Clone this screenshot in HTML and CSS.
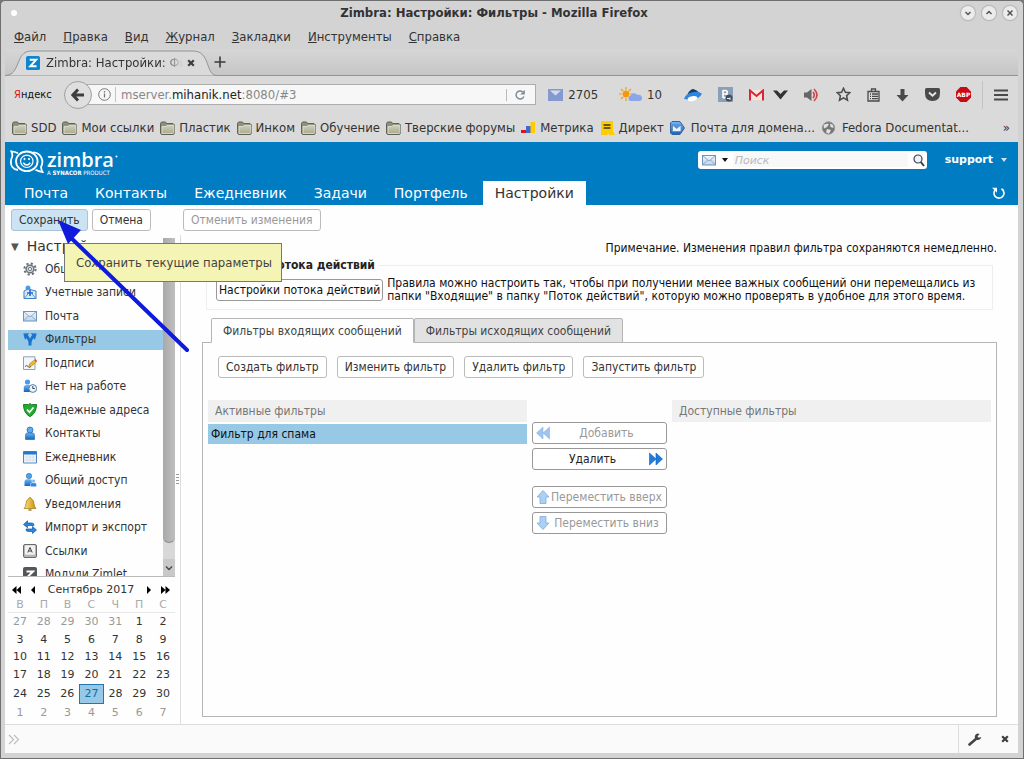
FILE: index.html
```html
<!DOCTYPE html>
<html lang="ru">
<head>
<meta charset="utf-8">
<title>Zimbra: Настройки: Фильтры</title>
<link rel="stylesheet" href="styles.css">
</head>
<body>
<svg class="defs" aria-hidden="true">
  <defs>
    <linearGradient id="g-blue" x1="0" y1="0" x2="0" y2="1"><stop offset="0" stop-color="#6db8f4"/><stop offset="1" stop-color="#1264bd"/></linearGradient>
    <linearGradient id="g-env" x1="0" y1="0" x2="0" y2="1"><stop offset="0" stop-color="#f2f7fc"/><stop offset="1" stop-color="#bdd3ea"/></linearGradient>
    <linearGradient id="g-folder" x1="0" y1="0" x2="0" y2="1"><stop offset="0" stop-color="#cdd0b8"/><stop offset="1" stop-color="#a9ac93"/></linearGradient>
    <linearGradient id="g-gold" x1="0" y1="0" x2="1" y2="0"><stop offset="0" stop-color="#fbe27c"/><stop offset="1" stop-color="#c98f0c"/></linearGradient>
  </defs>
  <symbol id="folder" viewBox="0 0 15 14"><path d="M.5 12V2.500l1-1.500h4l1 1.500h6.500l1.500 1.500V12l-1 1.500h-12z" fill="#8d907d" stroke="#5f6255"/><path d="M2 12.500V5.500h4l1-1.200h7v7.200l-.8 1z" fill="url(#g-folder)" stroke="#ebecdf" stroke-width=".7"/></symbol>
  <symbol id="envelope" viewBox="0 0 14 12"><rect x=".5" y="1.500" width="13" height="9.500" fill="url(#g-env)" stroke="#6f94bd"/><path d="M1 2l6 5 6-5M1 10.500l4.500-4.500M13 10.500L8.500 6" fill="none" stroke="#7fa3ca" stroke-width=".9"/></symbol>
  <symbol id="person" viewBox="0 0 14 14"><path d="M2.500 13.500V9.500Q2.500 6.800 5 6.800h4q2.500 0 2.500 2.700v4z" fill="url(#g-blue)" stroke="#1a5fae" stroke-width=".6"/><circle cx="7" cy="4" r="3" fill="#5fadef" stroke="#1d63ad" stroke-width=".7"/></symbol>
</svg>
<div class="window">
  <header class="titlebar">
    <span class="win-dot"></span>
    <h1 class="win-title">Zimbra: Настройки: Фильтры - Mozilla Firefox</h1>
    <div class="win-buttons">
      <button class="win-btn" aria-label="Свернуть"><svg viewBox="0 0 14 14"><path d="M4.500 6l2.500 2.500L9.500 6"/></svg></button>
      <button class="win-btn" aria-label="Развернуть"><svg viewBox="0 0 14 14"><path d="M4.500 8L7 5.500 9.500 8"/></svg></button>
      <button class="win-btn" aria-label="Закрыть"><svg viewBox="0 0 14 14"><path d="M4.500 4.500l5 5M9.500 4.500l-5 5"/></svg></button>
    </div>
  </header>
  <nav class="menubar">
    <a href="#"><u>Ф</u>айл</a><a href="#"><u>П</u>равка</a><a href="#"><u>В</u>ид</a><a href="#"><u>Ж</u>урнал</a><a href="#"><u>З</u>акладки</a><a href="#"><u>И</u>нструменты</a><a href="#"><u>С</u>правка</a>
  </nav>
  <div class="tabstrip">
    <svg class="tab-shape" viewBox="0 0 212 26"><path d="M0 25.500C16 25.500 10 1 26 1H188C206 1 200 25.500 212 25.500" fill="#dadada" stroke="#8f949a"/></svg>
    <div class="tab-body">
      <svg class="fav" viewBox="0 0 15 15"><rect width="15" height="15" rx="2" fill="#0a86cf"/><path d="M4 4h7L4.500 11H11.300" fill="none" stroke="#fff" stroke-width="2"/></svg>
      <span class="tab-title">Zimbra: Настройки: Фильтры</span>
      <button class="tab-close" aria-label="Закрыть вкладку"><svg viewBox="0 0 8 8"><path d="M1.200 1.200l5.600 5.600M6.800 1.200L1.200 6.800" stroke="#3d3d3d" stroke-width="2.200"/></svg></button>
    </div>
    <button class="tab-new" aria-label="Новая вкладка"><svg viewBox="0 0 12 12"><path d="M6 .5v11M.5 6h11" stroke="#3a3a3a" stroke-width="1.600"/></svg></button>
  </div>
  <div class="navbar">
    <span class="yandex"><b>Я</b>ндекс</span>
    <button class="back" aria-label="Назад"><svg viewBox="0 0 14 14"><path d="M7 1.500L1.800 7 7 12.500M2.500 7H13" fill="none" stroke="#3d3d3d" stroke-width="3"/></svg></button>
    <div class="urlbar">
      <svg class="info" viewBox="0 0 13 13"><circle cx="6.500" cy="6.500" r="5.800" fill="none" stroke="#777"/><path d="M6.500 5.500v4M6.500 3v1.500" stroke="#777" stroke-width="1.300"/></svg>
      <span class="url">mserver.<b>mihanik.net</b>:8080/#3</span>
      <button class="reload" aria-label="Обновить"><svg viewBox="0 0 12 12"><path d="M9.800 7.500A4 4 0 1 1 8.800 3" fill="none" stroke="#7f8b95" stroke-width="1.500"/><path d="M10.800.800v4.700H6.300z" fill="#7f8b95"/></svg></button>
    </div>
    <div class="addons">
      <button class="addon mail"><svg width="15" height="12" viewBox="0 0 15 12"><rect width="15" height="12" fill="#8499cf"/><path d="M2 1.500L7.500 6.500 13 1.500" fill="#d3dbef" /></svg>2705</button>
      <button class="addon weather"><svg width="23" height="15" viewBox="0 0 23 15"><g stroke="#f29b1c" stroke-width="1.200"><path d="M7 0v14M0 7h14M2 2l10 10M12 2L2 12"/></g><circle cx="7" cy="7" r="4" fill="#f2990f" stroke="#e6d5b8"/><path d="M11 14a3 3 0 0 1 .5-5.500 4 4 0 0 1 7-.5 3 3 0 0 1 2.500 6z" fill="#8ba7e8"/></svg>10</button>
      <button class="addon" aria-label="Яндекс Диск"><svg width="18" height="14" viewBox="0 0 20 15"><path d="M4 6Q8 0 11 1t6 4L9 8z" fill="#1c3b5c"/><path d="M0 12Q2 6 9 4.500T20 6Q17 12 8 13z" fill="#2d86e4"/><ellipse cx="9.500" cy="11.500" rx="5.500" ry="2.600" transform="rotate(-12 9.500 11.500)" fill="#fff"/></svg></button>
      <button class="addon" aria-label="ВКонтакте"><svg width="15" height="15" viewBox="0 0 15 15"><rect width="15" height="15" fill="#8b9fba"/><path d="M5 3v8M5 3.500h2.500a1.500 1.500 0 0 1 0 3.500H5M8 7a1.800 1.800 0 0 1 0 3.600H5" stroke="#fff" stroke-width="1.600" fill="none"/><circle cx="11" cy="11" r="3.500" fill="#3f4d5c"/><path d="M9 11.500h3M12 13V10.500" stroke="#eee"/></svg></button>
      <button class="addon gmail" aria-label="Gmail"><svg width="15" height="12" viewBox="0 0 15 12"><rect x="1" y="1" width="13" height="10" fill="#f3e7da"/><path d="M1 11.500V1.500L7.500 7 14 1.500v10" fill="none" stroke="#e02136" stroke-width="2"/></svg><svg width="15" height="10" viewBox="0 0 15 10"><path d="M0 .5h4L7.500 4 11 .5h4L7.500 9.500z" fill="#333"/></svg></button>
      <button class="addon" aria-label="Звук"><svg width="16" height="14" viewBox="0 0 16 14"><path d="M0 4.500h3L7.500 1v12L3 9.500H0z" fill="#666"/><path d="M9 4q2.500 3 0 6M10 1q6 6 0 12" fill="none" stroke="#d0454a" stroke-width="1.600"/></svg></button>
      <button class="addon" aria-label="Закладка"><svg width="15" height="15" viewBox="0 0 15 15"><path d="M7.500 1.200l1.900 4 4.400.5-3.200 3 .9 4.500-4-2.300-4 2.300.9-4.500-3.200-3 4.400-.5z" fill="none" stroke="#4a4a4a" stroke-width="1.500"/></svg></button>
      <button class="addon" aria-label="Библиотека"><svg width="13" height="14" viewBox="0 0 13 14"><path d="M1 3.500h11v9.500H1zM4.500 3V1h4v2M3 6h1M5 6h6M3 8.300h1M5 8.300h6M3 10.600h1M5 10.600h6" fill="none" stroke="#4a4a4a" stroke-width="1.300"/></svg></button>
      <button class="addon" aria-label="Загрузки"><svg width="13" height="14" viewBox="0 0 13 14"><path d="M4.500 1h4v6H12.500L6.500 13.500.5 7h4z" fill="#4a4a4a"/></svg></button>
      <button class="addon" aria-label="Pocket"><svg width="15" height="13" viewBox="0 0 15 13"><path d="M1.500 0h12Q15 0 15 1.500V5q0 8-7.500 8T0 5V1.500Q0 0 1.500 0z" fill="#4a4a4a"/><path d="M4 4.500l3.500 3.200L11 4.500" fill="none" stroke="#e8e8e8" stroke-width="1.800"/></svg></button>
      <button class="addon" aria-label="Adblock Plus"><svg width="15" height="15" viewBox="0 0 15 15"><path d="M4.400 0h6.200L15 4.400v6.200L10.600 15H4.400L0 10.600V4.400z" fill="#cc0814"/><text x="7.500" y="10" text-anchor="middle" class="abp">ABP</text></svg></button>
      <button class="addon burger" aria-label="Меню"><svg width="14" height="12" viewBox="0 0 14 12"><path d="M0 1.500h14M0 6h14M0 10.500h14" stroke="#4a4a4a" stroke-width="2.200"/></svg></button>
    </div>
  </div>
  <nav class="bookmarks">
    <a href="#"><svg><use href="#folder"/></svg>SDD</a>
    <a href="#"><svg><use href="#folder"/></svg>Мои ссылки</a>
    <a href="#"><svg><use href="#folder"/></svg>Пластик</a>
    <a href="#"><svg><use href="#folder"/></svg>Инком</a>
    <a href="#"><svg><use href="#folder"/></svg>Обучение</a>
    <a href="#"><svg><use href="#folder"/></svg>Тверские форумы</a>
    <a href="#"><svg viewBox="0 0 15 14"><path d="M0 9h6v3H0z" fill="#e2121c"/><path d="M5 5h5v7H5z" fill="#3c6cd0"/><path d="M9.500 1H14v11H9.500z" fill="#fc0"/></svg>Метрика</a>
    <a href="#"><svg viewBox="0 0 15 14"><path d="M1 0h12v10l2 4H9l-1-2-1 2H1z" fill="#fc0"/><path d="M3.500 4h7M3.500 7h7" stroke="#333" stroke-width="1.500"/></svg>Директ</a>
    <a href="#" class="domain"><svg viewBox="0 0 15 14"><path d="M2 .5h8L14.500 7 10 13.500H2L.5 12V2z" fill="url(#g-blue)" stroke="#3a62a0"/><path d="M2.500 4h8.500v6.500H2.500zM2.500 4l4.200 3.500L11 4" fill="#e9f1fb" stroke="#5e84bd" stroke-width=".8"/></svg>Почта для домена...</a>
    <a href="#" class="fedora"><svg viewBox="0 0 15 14"><circle cx="7.500" cy="7" r="6.200" fill="#777" stroke="#999"/><path d="M2.500 4Q6 2 8 3L6 6 3 7.500zM9 2.500l3 1.500.5 3-3-1zM6 8l4 1-2 3.800-3-1.500z" fill="#e3e3e3"/></svg>Fedora Documentat...</a>
    <button class="more" aria-label="Ещё закладки">»</button>
  </nav>

  <main class="app">
    <header class="app-head">
      <div class="head-top">
        <div class="logo">
          <svg class="logo-face" viewBox="0 0 34 24" fill="none" stroke="#fff"><path d="M8 3.200Q5 1.700 1.300 1.400 2.700 4 2.200 6.500-.5 13 2.300 17 4 19.500 8 20" stroke-width="1.800"/><path d="M23 2.300Q29 2.500 31.300 7.500T31 17q.3 3 1.500 5-4-.4-7-2.200" stroke-width="1.800"/><ellipse cx="16.800" cy="11.300" rx="10.800" ry="9.800" stroke-width="1.800"/><circle cx="16.800" cy="11.300" r="6.200" stroke-width="1.200"/><path d="M13.300 12.800q3.500 4.500 7 0" stroke-width="1.600"/><circle cx="14.500" cy="9" r=".7" fill="#fff"/><circle cx="19" cy="9" r=".7" fill="#fff"/></svg>
          <div class="logo-text"><span class="logo-name">zimbra<svg width="3" height="3" viewBox="0 0 3 3"><circle cx="1.500" cy="1.500" r="1" fill="#fff"/></svg></span><span class="logo-sub">A <b>SYNACOR</b> PRODUCT</span></div>
        </div>
        <div class="head-right">
          <div class="search">
            <button class="search-type" aria-label="Тип поиска"><svg width="14" height="12"><use href="#envelope"/></svg><span class="caret"></span></button>
            <input type="text" placeholder="Поиск" aria-label="Поиск">
            <button class="search-go" aria-label="Искать"><svg width="12" height="13" viewBox="0 0 12 13"><circle cx="5" cy="5" r="4" fill="#eef2f6" stroke="#3c4250" stroke-width="1.200"/><path d="M7.800 8l3.200 4" stroke="#333a48" stroke-width="2"/></svg></button>
          </div>
          <button class="user">support<span class="caret"></span></button>
        </div>
      </div>
      <div class="head-tabs">
        <nav class="app-tabs">
          <a href="#">Почта</a><a href="#">Контакты</a><a href="#">Ежедневник</a><a href="#">Задачи</a><a href="#">Портфель</a><a href="#" class="active">Настройки</a>
        </nav>
        <button class="refresh" aria-label="Обновить данные"><svg width="13" height="13" viewBox="0 0 13 13"><path d="M9.500 1.800A5 5 0 1 1 3.500 2.500" fill="none" stroke="#fff" stroke-width="1.600"/><path d="M0 .8h5v5z" fill="#fff"/></svg></button>
      </div>
    </header>
    <div class="toolbar">
      <button class="btn primary">Сохранить</button>
      <button class="btn">Отмена</button>
      <button class="btn revert" disabled>Отменить изменения</button>
    </div>
    <div class="columns">
      <aside class="side">
        <div class="tree">
          <div class="tree-view">
            <h2 class="tree-head"><span>▼</span>Настройки</h2>
            <ul class="tree-list">
              <li><svg viewBox="0 0 14 14"><circle cx="7" cy="7" r="5.600" fill="none" stroke="#687078" stroke-width="2" stroke-dasharray="2.200 2.200"/><circle cx="7" cy="7" r="3.800" fill="#dbe1e6" stroke="#6c747c" stroke-width="1.500"/><circle cx="7" cy="7" r="1.600" fill="#fff" stroke="#6c747c"/></svg>Общие</li>
              <li><svg viewBox="0 0 14 14"><circle cx="5" cy="3" r="2.500" fill="#4b9fe8"/><path d="M1 6l4-2 8 2v7.500H1z" fill="#d9e9f8" stroke="#3f7ec4"/><path d="M1 13.500L5 9M13 13.500L9 9" stroke="#5f93cc"/><path d="M7 5v6M4 8h6" stroke="#1c6ccb" stroke-width="1.600"/></svg>Учетные записи</li>
              <li><svg viewBox="0 0 14 12"><use href="#envelope"/></svg>Почта</li>
              <li class="selected"><svg viewBox="0 0 14 14"><path d="M5.500 13.500V10.500Q5.500 8.500 3.500 6.300L2 7.800.3 1.600 6.300 1.300 4.800 3Q6.500 5 7 7 7.500 5 9.200 3L7.700 1.300l6 .3L12 7.800 10.500 6.300Q8.500 8.500 8.500 10.500v3z" fill="#1c73cd"/></svg>Фильтры</li>
              <li><svg viewBox="0 0 14 14"><path d="M.5.8h11.500v12.700H.5z" fill="#f3f6f8" stroke="#8ba2b5"/><path d="M2 10.500q2-2 3 0t3 0" fill="none" stroke="#555"/><path d="M6 10.500l.5-2.700L11.500 4l2 2-5 4z" fill="#f6b822" stroke="#9a6b10" stroke-width=".5"/><path d="M11.500 4l1-1 1.500 2-.8 1z" fill="#d63c3c"/></svg>Подписи</li>
              <li><svg viewBox="0 0 14 14"><path d="M.8 13V8.500Q.8 6 3 6h3q2 0 2 2.500V13z" fill="url(#g-blue)"/><circle cx="4.500" cy="3" r="2.600" fill="#4a9be6"/><circle cx="9.800" cy="9.500" r="3.900" fill="#eef4fa" stroke="#54809f"/><path d="M9.800 7v2.500h2" fill="none" stroke="#345"/></svg>Нет на работе</li>
              <li><svg viewBox="0 0 14 14"><path d="M7 .5l1.500 1.200 5-.2Q13.500 10 7 13.700.5 10 .5 1.500l5 .2z" fill="#1fae30" stroke="#157a20"/><path d="M4 6.500l2.500 2.800L10.500 4.500" fill="none" stroke="#fff" stroke-width="1.700"/></svg>Надежные адреса</li>
              <li><svg><use href="#person"/></svg>Контакты</li>
              <li><svg viewBox="0 0 14 14"><path d="M.5 1.500h13v11.500H.5z" fill="#eef4fa" stroke="#4f86c0"/><path d="M.5 1.500h13v3H.5z" fill="#2378cf"/><path d="M1 7h12M1 10h12M4 5v8M7 5v8M10 5v8" stroke="#cfdbe6" stroke-width=".7"/></svg>Ежедневник</li>
              <li><svg viewBox="0 0 14 14"><circle cx="6" cy="3" r="2.700" fill="#4fa2ec" stroke="#1d63ad" stroke-width=".5"/><path d="M1.500 13V9q0-2.700 2.500-2.700h3.500Q9.500 6.300 9.500 9v4z" fill="url(#g-blue)"/><circle cx="10.500" cy="8" r="1.700" fill="#69b2f2" stroke="#fff" stroke-width=".5"/><path d="M7.500 13.800V11.500Q7.500 9.800 9 9.800h3q1.500 0 1.500 1.700v2.300z" fill="#2f86dc" stroke="#fff" stroke-width=".5"/></svg>Общий доступ</li>
              <li><svg viewBox="0 0 14 14"><path d="M7 .5q1.300 0 1.300 1.300Q11 3 11 6.500q0 3 2 5H1q2-2 2-5Q3 3 5.700 1.800 5.700.5 7 .5z" fill="url(#g-gold)" stroke="#a8790f" stroke-width=".7"/><path d="M5.500 12.300h3v1.300h-3z" fill="#8a650f"/></svg>Уведомления</li>
              <li><svg viewBox="0 0 14 14"><path d="M.5 4.500L4.500.8V3H9q2 0 2 2.500H4.500v2.200zM13.500 10L9.500 13.500V11.500H5Q3 11.500 3 9h6.500V6.500z" fill="#2a86dd" stroke="#14579f" stroke-width=".7"/></svg>Импорт и экспорт</li>
              <li><svg viewBox="0 0 14 14"><rect x=".5" y=".5" width="13" height="13" rx="1.500" fill="#b5b5b5" stroke="#6a6a6a"/><rect x="2" y="1.200" width="10" height="9.500" rx="1" fill="#f1f1f1"/><path d="M4.800 8.500L7 3.500l2.200 5M5.500 7h3" fill="none" stroke="#444"/></svg>Ссылки</li>
              <li><svg viewBox="0 0 14 14"><rect width="14" height="14" rx="2" fill="#55565a"/><path d="M3.500 4.500h6.500L4.500 10h6.500" fill="none" stroke="#fff" stroke-width="2"/></svg>Модули Zimlet</li>
            </ul>
          </div>
          <div class="scroll" aria-hidden="true"><div class="thumb"></div><div class="scroll-down"><svg width="8" height="6" viewBox="0 0 8 6"><path d="M1 1.500l3 3 3-3" fill="none" stroke="#444" stroke-width="1.300"/></svg></div></div>
        </div>
        <div class="calendar">
          <div class="cal-head">
            <button aria-label="Год назад"><svg width="9" height="8" viewBox="0 0 9 8"><path d="M4.500 0v8L0 4zM9 0v8L4.500 4z"/></svg></button>
            <button aria-label="Месяц назад"><svg width="4" height="8" viewBox="0 0 4 8"><path d="M4 0v8L0 4z"/></svg></button>
            <span>Сентябрь 2017</span>
            <button aria-label="Месяц вперёд"><svg width="4" height="8" viewBox="0 0 4 8"><path d="M0 0v8l4-4z"/></svg></button>
            <button aria-label="Год вперёд"><svg width="9" height="8" viewBox="0 0 9 8"><path d="M0 0v8l4.500-4zM4.500 0v8L9 4z"/></svg></button>
          </div>
          <table class="cal">
            <thead><tr><th>В</th><th>П</th><th>В</th><th>С</th><th>Ч</th><th>П</th><th>С</th></tr></thead>
            <tbody>
            <tr><td class="out">27</td><td class="out">28</td><td class="out">29</td><td class="out">30</td><td class="out">31</td><td>1</td><td>2</td></tr>
            <tr><td>3</td><td>4</td><td>5</td><td>6</td><td>7</td><td>8</td><td>9</td></tr>
            <tr><td>10</td><td>11</td><td>12</td><td>13</td><td>14</td><td>15</td><td>16</td></tr>
            <tr><td>17</td><td>18</td><td>19</td><td>20</td><td>21</td><td>22</td><td>23</td></tr>
            <tr><td>24</td><td>25</td><td>26</td><td class="today">27</td><td>28</td><td>29</td><td>30</td></tr>
            <tr><td class="out">1</td><td class="out">2</td><td class="out">3</td><td class="out">4</td><td class="out">5</td><td class="out">6</td><td class="out">7</td></tr>
            </tbody>
          </table>
        </div>
      </aside>
      <div class="sash"><span class="grip"></span></div>
      <section class="content">
        <p class="note">Примечание. Изменения правил фильтра сохраняются немедленно.</p>
        <fieldset class="stream">
          <legend>Фильтр потока действий</legend>
          <button class="btn dark">Настройки потока действий</button>
          <p>Правила можно настроить так, чтобы при получении менее важных сообщений они перемещались из папки "Входящие" в папку "Поток действий", которую можно проверять в удобное для этого время.</p>
        </fieldset>
        <div class="ptabs">
          <button class="ptab on">Фильтры входящих сообщений</button><button class="ptab">Фильтры исходящих сообщений</button>
        </div>
        <div class="panel">
          <div class="actions">
            <button class="btn">Создать фильтр</button><button class="btn">Изменить фильтр</button><button class="btn">Удалить фильтр</button><button class="btn">Запустить фильтр</button>
          </div>
          <div class="lists">
            <div class="list"><h3>Активные фильтры</h3><div class="list-row">Фильтр для спама</div></div>
            <div class="moves">
              <button class="btn dark move" disabled><svg viewBox="0 0 14 14"><path d="M7 1v12L.5 7zM13.500 1v12L7 7z" fill="#9fc5ef" stroke="#8ab6e6" stroke-width=".6"/></svg><span>Добавить</span></button>
              <button class="btn dark move"><span>Удалить</span><svg viewBox="0 0 14 14"><path d="M.5 1v12L7 7zM7 1v12l6.500-6z" fill="#1f7ddb" stroke="#1260b8" stroke-width=".6"/></svg></button>
              <button class="btn dark move second" disabled><svg viewBox="0 0 14 14"><path d="M7 .5l6 6.500H10v6.500H4V7H1z" fill="#acd0f3" stroke="#7fabdd" stroke-width=".8"/></svg><span>Переместить вверх</span></button>
              <button class="btn dark move" disabled><svg viewBox="0 0 14 14"><path d="M7 13.500l6-6.500H10V.5H4V7H1z" fill="#acd0f3" stroke="#7fabdd" stroke-width=".8"/></svg><span>Переместить вниз</span></button>
            </div>
            <div class="list"><h3>Доступные фильтры</h3></div>
          </div>
        </div>
      </section>
    </div>
    <footer class="status">
      <svg width="12" height="11" viewBox="0 0 12 11"><path d="M1 1l4.500 4.500L1 10M6 1l4.500 4.500L6 10" fill="none" stroke="#bbb" stroke-width="1.100"/></svg>
      <div class="status-tools">
        <button aria-label="Настройки панели"><svg width="14" height="13" viewBox="0 0 14 13"><path d="M1.500 11.500L8.500 5.500" stroke="#454545" stroke-width="2.600" stroke-linecap="round"/><path d="M11.500 1A3.200 3.200 0 1 0 13.200 4L10.800 4.800 9.500 3.500z" fill="#454545"/></svg></button>
        <button aria-label="Закрыть панель"><svg width="8" height="8" viewBox="0 0 8 8"><path d="M1.200 1.200l5.600 5.600M6.800 1.200L1.200 6.800" stroke="#3d3d3d" stroke-width="2.200"/></svg></button>
      </div>
    </footer>
    <div class="tooltip" role="tooltip">Сохранить текущие параметры</div>
    <svg class="pointer" width="140" height="140" viewBox="0 0 140 140"><path d="M15 15L136 132" stroke="#0f1adb" stroke-width="4" stroke-linecap="round"/><path d="M7 2L30 12 17 26z" fill="#0f1adb"/></svg>
  </main>
</div>
</body>
</html>
```
FILE: styles.css
```css
* { box-sizing: border-box; }

body {
  margin: 0;
  font: 13px "DejaVu Sans Condensed", "DejaVu Sans", sans-serif;
  color: #333;
  background: #777;
}

button {
  margin: 0;
  padding: 0;
  border: 0;
  background: none;
  font: inherit;
  color: inherit;
}

a { color: inherit; text-decoration: none; }
svg { display: block; flex: none; }
.defs { position: absolute; width: 0; height: 0; }

.window {
  display: flex;
  flex-direction: column;
  height: 100vh;
  min-height: 700px;
  border: 1px solid #6f6f6f;
  border-radius: 5px 5px 0 0;
  padding: 0 5px 5px 4px;
  background: #d3d3d3;
  overflow: hidden;
}

/* Browser chrome */
.titlebar {
  display: flex;
  align-items: center;
  height: 23px;
  flex: none;
}
.win-dot {
  width: 6px;
  height: 6px;
  margin-left: 6px;
  border-radius: 50%;
  background: #fff;
}
.win-title {
  flex: 1;
  margin: 0;
  padding-left: 10px;
  font-size: 13px;
  font-weight: bold;
  text-align: center;
}
.win-buttons { display: flex; gap: 7px; padding-right: 1px; }
.win-btn {
  width: 14px;
  height: 14px;
  border-radius: 50%;
  background: #ececec;
  box-shadow: 0 0 1px 1px #b5b5b5;
}
.win-btn svg { fill: none; stroke: #555; stroke-width: 1.500; }

.menubar {
  display: flex;
  align-items: center;
  gap: 17px;
  height: 25px;
  flex: none;
  padding-left: 9px;
}

.tabstrip {
  position: relative;
  display: flex;
  height: 27px;
  flex: none;
  border-bottom: 1px solid #8f949a;
  background: linear-gradient(#d6d6d6, #c6c6c6);
}
.tab-shape {
  position: absolute;
  left: 0;
  top: 1px;
  width: 212px;
  height: 26px;
}
.tab-body {
  position: relative;
  display: flex;
  align-items: center;
  width: 193px;
  padding: 1px 0 0 21px;
}
.fav { width: 14px; height: 14px; margin-right: 6px; }
.tab-title {
  flex: 1;
  overflow: hidden;
  white-space: nowrap;
  mask-image: linear-gradient(90deg, #000 84%, transparent);
}
.tab-close { margin: 0 3px 0 4px; }
.tab-close svg { width: 8px; height: 8px; }
.tab-new { margin-left: 16px; }
.tab-new svg { width: 12px; height: 12px; }

.navbar {
  display: flex;
  align-items: center;
  height: 37px;
  flex: none;
  padding-left: 9px;
  background: #dadada;
}
.yandex {
  width: 50px;
  font-size: 11px;
  color: #111;
}
.yandex b { color: #e1121c; font-weight: normal; }
.back {
  position: relative;
  display: grid;
  place-items: center;
  width: 28px;
  height: 28px;
  border: 1px solid #a0a0a0;
  border-radius: 50%;
  background: #dfdfdf;
}
.back svg { width: 14px; height: 14px; }
.urlbar {
  display: flex;
  align-items: center;
  flex: 1;
  height: 21px;
  margin-left: -5px;
  padding-left: 10px;
  border: 1px solid #adadad;
  background: #f7f7f7;
}
.info { width: 13px; height: 13px; }
.url {
  flex: 1;
  margin-left: 4px;
  padding-left: 5px;
  border-left: 1px solid #c4c4c4;
  color: #888;
}
.url b { font-weight: normal; color: #222; }
.reload {
  padding: 0 9px 0 7px;
  border-left: 1px solid #bbb;
}
.reload svg { width: 12px; height: 12px; }
.addons {
  display: flex;
  align-items: center;
  gap: 16px;
  padding: 0 10px 0 12px;
  flex: none;
}
.addon { display: flex; align-items: center; gap: 5px; }
.weather { margin: 0 6px 0 5px; }
.gmail { gap: 9px; }
.abp { font: bold 6px "DejaVu Sans", sans-serif; fill: #fff; }
.burger { margin-left: -5px; padding: 8px 0 8px 11px; border-left: 1px solid #c3c3c3; }

.bookmarks {
  display: flex;
  align-items: center;
  gap: 6px;
  height: 29px;
  flex: none;
  padding: 0 8px 0 7px;
  background: #dadada;
  white-space: nowrap;
}
.bookmarks a { display: flex; align-items: center; gap: 4px; }
.bookmarks svg { width: 15px; height: 14px; }
.bookmarks .domain, .bookmarks .fedora { gap: 6px; }
.more { margin-left: auto; }

/* Application header */
.app {
  position: relative;
  display: flex;
  flex-direction: column;
  flex: 1;
  min-height: 0;
  background: #fefefe;
}
.app-head { flex: none; background: #007cc3; color: #fff; }
.head-top {
  display: flex;
  justify-content: space-between;
  height: 39px;
  padding: 8px 11px 0 5px;
}
.logo { display: flex; gap: 3px; }
.logo-face { width: 34px; height: 24px; }
.logo-text { display: flex; flex-direction: column; }
.logo-name { display: flex; font: 600 20px/20px "Open Sans", sans-serif; }
.logo-name svg { margin: 5px 0 0 1px; }
.logo-sub { font: 6px/6px "DejaVu Sans Condensed", sans-serif; }
.head-right { display: flex; align-items: flex-start; gap: 18px; }
.search {
  display: flex;
  align-items: center;
  width: 229px;
  height: 18px;
  margin-top: 1px;
  padding: 0 2px 0 4px;
  border-radius: 3px;
  background: #fff;
}
.search-type { display: flex; align-items: center; gap: 6px; }
.caret {
  border: 3px solid transparent;
  border-top: 4px solid #111;
  border-bottom: 0;
}
.search input {
  flex: 1;
  min-width: 0;
  height: 14px;
  margin: 0 5px 0 5px;
  padding: 0 2px;
  border: 0;
  background: #f8f8f8;
  font: 11px "DejaVu Sans", sans-serif;
}
.search input::placeholder { color: #bbb; font-style: italic; }
.user {
  display: flex;
  align-items: center;
  gap: 8px;
  margin-top: 3px;
  font: bold 11px "DejaVu Sans", sans-serif;
}
.user .caret { border-top-color: #cfe5f3; }
.head-tabs {
  display: flex;
  justify-content: space-between;
  padding: 0 13px 0 7px;
}
.app-tabs { display: flex; gap: 3px; }
.app-tabs a { padding: 0 12px; font: 14px/24px "DejaVu Sans", sans-serif; }
.app-tabs .active { background: #fefefe; color: #333; }

/* Buttons */
.btn {
  height: 22px;
  padding: 0 7px;
  border: 1px solid #bbb;
  border-radius: 3px;
  background: #fff;
  font-size: 12px;
  white-space: nowrap;
}
.btn:disabled { color: #999; }
.btn.dark { border-color: #999; }
.btn.primary { background: #cbe3f3; border-color: #a9c4d6; }

.toolbar {
  display: flex;
  gap: 4px;
  flex: none;
  padding: 4px 6px;
}
.revert { margin-left: 28px; }

.columns { display: flex; flex: 1; min-height: 0; }

/* Sidebar */
.side {
  display: flex;
  flex-direction: column;
  width: 170px;
  flex: none;
  padding-left: 3px;
}
.tree {
  display: flex;
  flex: 1;
  min-height: 0;
  border-bottom: 1px solid #bbb;
}
.tree-view { flex: 1; min-width: 0; overflow: hidden; }
.tree-head {
  display: flex;
  align-items: center;
  gap: 8px;
  height: 22px;
  margin: 0;
  padding: 0 0 0 3px;
  font: 14px "DejaVu Sans", sans-serif;
}
.tree-head span { font-size: 10px; color: #555; }
.tree-list {
  display: grid;
  grid-auto-rows: 1fr;
  height: 329px;
  margin: 0;
  padding: 0;
  list-style: none;
  font-size: 12px;
}
.tree-list li {
  display: flex;
  align-items: center;
  gap: 8px;
  padding: 2px 0 2px 15px;
  white-space: nowrap;
}
.tree-list li.selected { background: linear-gradient(#97c8e6, #97c8e6) 0 2px / 100% 20px no-repeat; }
.tree-list svg { width: 14px; height: 14px; }
.scroll {
  display: flex;
  flex-direction: column;
  width: 12px;
  margin-top: 3px;
  background: #d8d8d8;
}
.thumb {
  flex: 1;
  margin-bottom: 16px;
  border-radius: 0 0 6px 6px;
  border-bottom: 1px solid #888;
  background: linear-gradient(90deg, #a9a9a9, #bfbfbf);
}
.scroll-down { display: grid; place-items: center; height: 17px; background: #c9c9c9; }

.calendar {
  flex: none;
  padding: 4px 0 2px;
  font: 11px "DejaVu Sans", sans-serif;
}
.cal-head {
  display: flex;
  align-items: center;
  height: 17px;
  padding: 0 5px 0 4px;
}
.cal-head button + button { margin-left: 10px; }
.cal-head span { flex: 1; text-align: center; }
.cal {
  width: 100%;
  height: 124px;
  border-collapse: collapse;
  table-layout: fixed;
  font-size: 11px;
  line-height: 14px;
  text-align: center;
}
.cal th { padding: 0; font-weight: normal; color: #aaa; border-bottom: 1px solid #e8e8e8; }
.cal td { padding: 0; }
.cal .out { color: #999; }
.cal .today { color: #0d6ca8; background: #97c8e6; border: 1px solid #1f78b0; }

.sash {
  display: grid;
  align-items: center;
  width: 6px;
  flex: none;
  border-right: 1px solid #ddd;
}
.grip {
  width: 3px;
  height: 12px;
  margin-left: 1px;
  background: repeating-linear-gradient(#999 0 1px, transparent 1px 3px);
}

/* Filter preferences */
.content {
  display: flex;
  flex-direction: column;
  flex: 1;
  min-width: 0;
  padding: 5px 21px 7px 21px;
  font-size: 12px;
  color: #111;
}
.note { margin: 0; line-height: 16px; text-align: right; }
.stream {
  display: flex;
  align-items: center;
  gap: 4px;
  min-width: 0;
  margin: 2px 4px 0;
  padding: 5px 8px 6px 9px;
  border: 1px solid #eee;
}
.stream legend { padding: 0 3px; font-weight: bold; color: #222; line-height: 14px; }
.stream .btn { flex: none; padding: 0 2px; }
.stream p { margin: 0; line-height: 13px; }
.ptabs {
  position: relative;
  display: flex;
  margin: 8px 0 -1px 9px;
}
.ptab {
  height: 25px;
  padding: 0 11px;
  border: 1px solid #b5b5b5;
  border-radius: 2px 2px 0 0;
  background: #e2e2e2;
  color: #444;
}
.ptab.on { background: #fefefe; border-bottom-color: #fefefe; }
.panel { flex: 1; border: 1px solid #b5b5b5; }
.actions { display: flex; gap: 10px; padding: 13px 15px 22px; }
.actions .btn { color: #333; }
.lists {
  display: grid;
  grid-template-columns: 1fr 135px 1fr;
  gap: 5px;
  padding: 0 5px;
}
.list h3 {
  margin: 0 0 2px;
  padding: 0 7px;
  background: #f0f0f0;
  font-size: 12px;
  font-weight: normal;
  line-height: 22px;
  color: #777;
}
.list-row { padding: 0 3px; background: #97c8e6; line-height: 20px; }
.moves { display: flex; flex-direction: column; gap: 4px; padding-top: 22px; }
.move { display: flex; align-items: center; padding: 0 3px; color: #222; }
.move span { flex: 1; text-align: center; }
.move svg { width: 14px; height: 14px; }
.move.second { margin-top: 12px; }

.status {
  display: flex;
  align-items: center;
  justify-content: space-between;
  height: 29px;
  flex: none;
  padding-left: 3px;
  border-top: 1px solid #ddd;
  background: #fafafa;
}
.status-tools {
  display: flex;
  align-items: center;
  gap: 19px;
  align-self: stretch;
  padding: 0 9px;
  border-left: 1px solid #ddd;
}

.tooltip {
  position: absolute;
  left: 59px;
  top: 101px;
  padding: 0 9px 0 11px;
  border: 1px solid #777;
  background: #f4f4b4;
  line-height: 37px;
  color: #444;
}
.pointer { position: absolute; left: 46px; top: 76px; }
```
